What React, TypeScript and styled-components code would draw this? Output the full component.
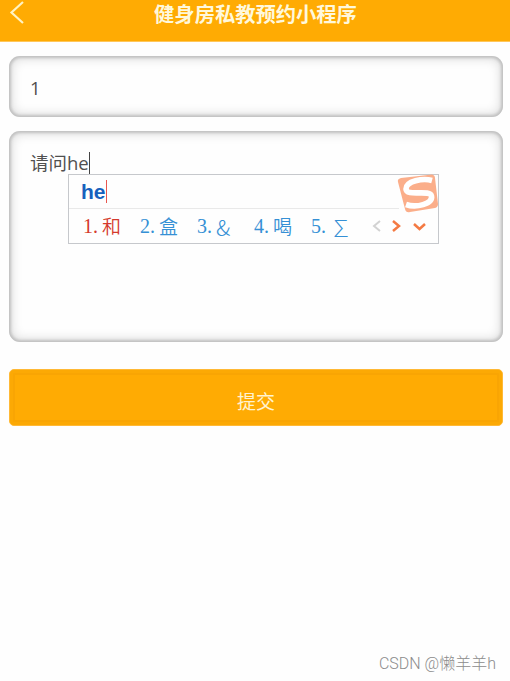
import React from "react";
import styled, { createGlobalStyle } from "styled-components";

const GlobalStyle = createGlobalStyle`
  * { box-sizing: border-box; }
  body {
    margin: 0;
    background: #fefefe;
    overflow: hidden;
    font-family: "Open Sans", "Noto Sans CJK SC", sans-serif;
  }
`;

const Page = styled.main`
  display: flex;
  flex-direction: column;
  width: 510px;
  height: 681px;
`;

const Header = styled.header`
  display: grid;
  grid-template-columns: 40px 1fr 40px;
  height: 42px;
  flex: none;
  background: #ffab03;
  border-bottom: 1px solid #ffc75a;
`;

const BackIcon = styled.svg`
  width: 16px;
  height: 24px;
  margin: 1px 0 0 9px;
  fill: none;
  stroke: #fff3c4;
  stroke-width: 2.2;
`;

const Title = styled.h1`
  margin: 0;
  padding-left: 1px;
  text-align: center;
  white-space: nowrap;
  color: #fff8dc;
  font: 700 20.3px/26px "Noto Sans CJK SC", sans-serif;
`;

const Form = styled.form`
  display: flex;
  flex-direction: column;
  padding: 14px 7px 0 9px;
`;

const Field = styled.div<{ $height: number }>`
  position: relative;
  height: ${(p) => p.$height}px;
  padding: 18px 21px;
  margin-bottom: 14px;
  border-radius: 11px;
  background: #fefefe;
  box-shadow: inset 0 0 3px 2px #c0c0c0, inset 0 0 11px 3px #dedede;
  color: #505050;
  font-size: 18.5px;
  line-height: 27px;
`;

const Caret = styled.span<{ $color: string; $height: number }>`
  display: inline-block;
  width: 1.5px;
  height: ${(p) => p.$height}px;
  background: ${(p) => p.$color};
`;

const Typed = styled.div`
  display: flex;
  align-items: center;
`;

const ImePopup = styled.div`
  position: absolute;
  left: 59px;
  top: 43px;
  width: 371px;
  height: 70px;
  border: 1px solid #c6c8cc;
  background: #fefefe;
`;

const Composition = styled.div`
  display: flex;
  align-items: center;
  width: 330px;
  height: 34px;
  padding-left: 12px;
  border-bottom: 1px solid #e9e9e9;
  color: #1761bd;
  font: 700 21px/34px "Liberation Sans", sans-serif;
`;

const Candidates = styled.div`
  display: flex;
  align-items: center;
  height: 34px;
  padding-left: 14px;
`;

const Candidate = styled.span<{ $active?: boolean }>`
  display: flex;
  width: 57px;
  color: ${(p) => (p.$active ? "#d53a2c" : "#3590d5")};
  font: 350 19px/30px "Noto Sans CJK SC", sans-serif;
`;

const Num = styled.span`
  display: inline-block;
  width: 19px;
  font: 20px/31px "Liberation Serif", serif;
`;

const Word = styled.span<{ $symbol?: boolean }>`
  font-size: ${(p) => (p.$symbol ? 22 : 19)}px;
  font-weight: ${(p) => (p.$symbol ? 300 : 350)};
`;

const Arrows = styled.svg`
  width: 62px;
  height: 20px;
  flex: none;
  fill: none;
  stroke: #f47a43;
  stroke-width: 2.5;
`;

const Logo = styled.svg`
  position: absolute;
  right: -1px;
  top: -2px;
  width: 42px;
  height: 42px;
`;

const Submit = styled.button`
  height: 57px;
  margin-top: 13px;
  padding: 6px 0 0;
  border: 1px solid #ffb936;
  border-radius: 5px;
  background: #ffab03;
  box-shadow: inset 0 0 0 3px #fca904, inset 0 0 0 5px #f9a503;
  color: #fff3d0;
  font: 400 19px/28px "Noto Sans CJK SC", sans-serif;
`;

const Watermark = styled.footer`
  margin: auto 14px 5px auto;
  color: #8c8c8c;
  font: 300 16px/24px Roboto, "Noto Sans CJK SC", sans-serif;
  white-space: nowrap;
`;

const candidates = ["和", "盒", "&", "喝", "∑"];

export default function App() {
  return (
    <Page>
      <GlobalStyle />
      <Header>
        <BackIcon viewBox="0 0 16 24">
          <path d="M14 1 2.5 11.5 14 22" />
        </BackIcon>
        <Title>健身房私教预约小程序</Title>
      </Header>
      <Form>
        <Field $height={61}>1</Field>
        <Field $height={211}>
          <Typed>
            请问he
            <Caret $color="#444" $height={22} />
          </Typed>
          <ImePopup>
            <Composition>
              he
              <Caret $color="#e8574f" $height={23} />
            </Composition>
            <Candidates>
              {candidates.map((word, i) => (
                <Candidate key={word} $active={i === 0}>
                  <Num>{i + 1}.</Num>
                  <Word $symbol={word === "&" || word === "∑"}>{word}</Word>
                </Candidate>
              ))}
              <Arrows viewBox="0 0 62 20">
                <path d="M12 5 6 10l6 5" stroke="#d2d2d2" strokeWidth="2" />
                <path d="m25 5 6 5-6 5" />
                <path d="m46 8 5.5 5L57 8" />
              </Arrows>
            </Candidates>
            <Logo viewBox="0 0 42 42">
              <path
                d="M4 5Q20 3 35 1.5Q38 2 38 5L41 31Q41 34 38 35L13 39Q9 40 8 36L1 9Q0 6 4 5Z"
                fill="#fbae8a"
              />
              <path
                d="M35 7.5C26 5 9 8 9 16C9 24 33 16 34.5 23C36 31 19 35 9 31.5"
                fill="none"
                stroke="#fff"
                strokeWidth="5.6"
              />
            </Logo>
          </ImePopup>
        </Field>
        <Submit type="button">提交</Submit>
      </Form>
      <Watermark>CSDN @懒羊羊h</Watermark>
    </Page>
  );
}
